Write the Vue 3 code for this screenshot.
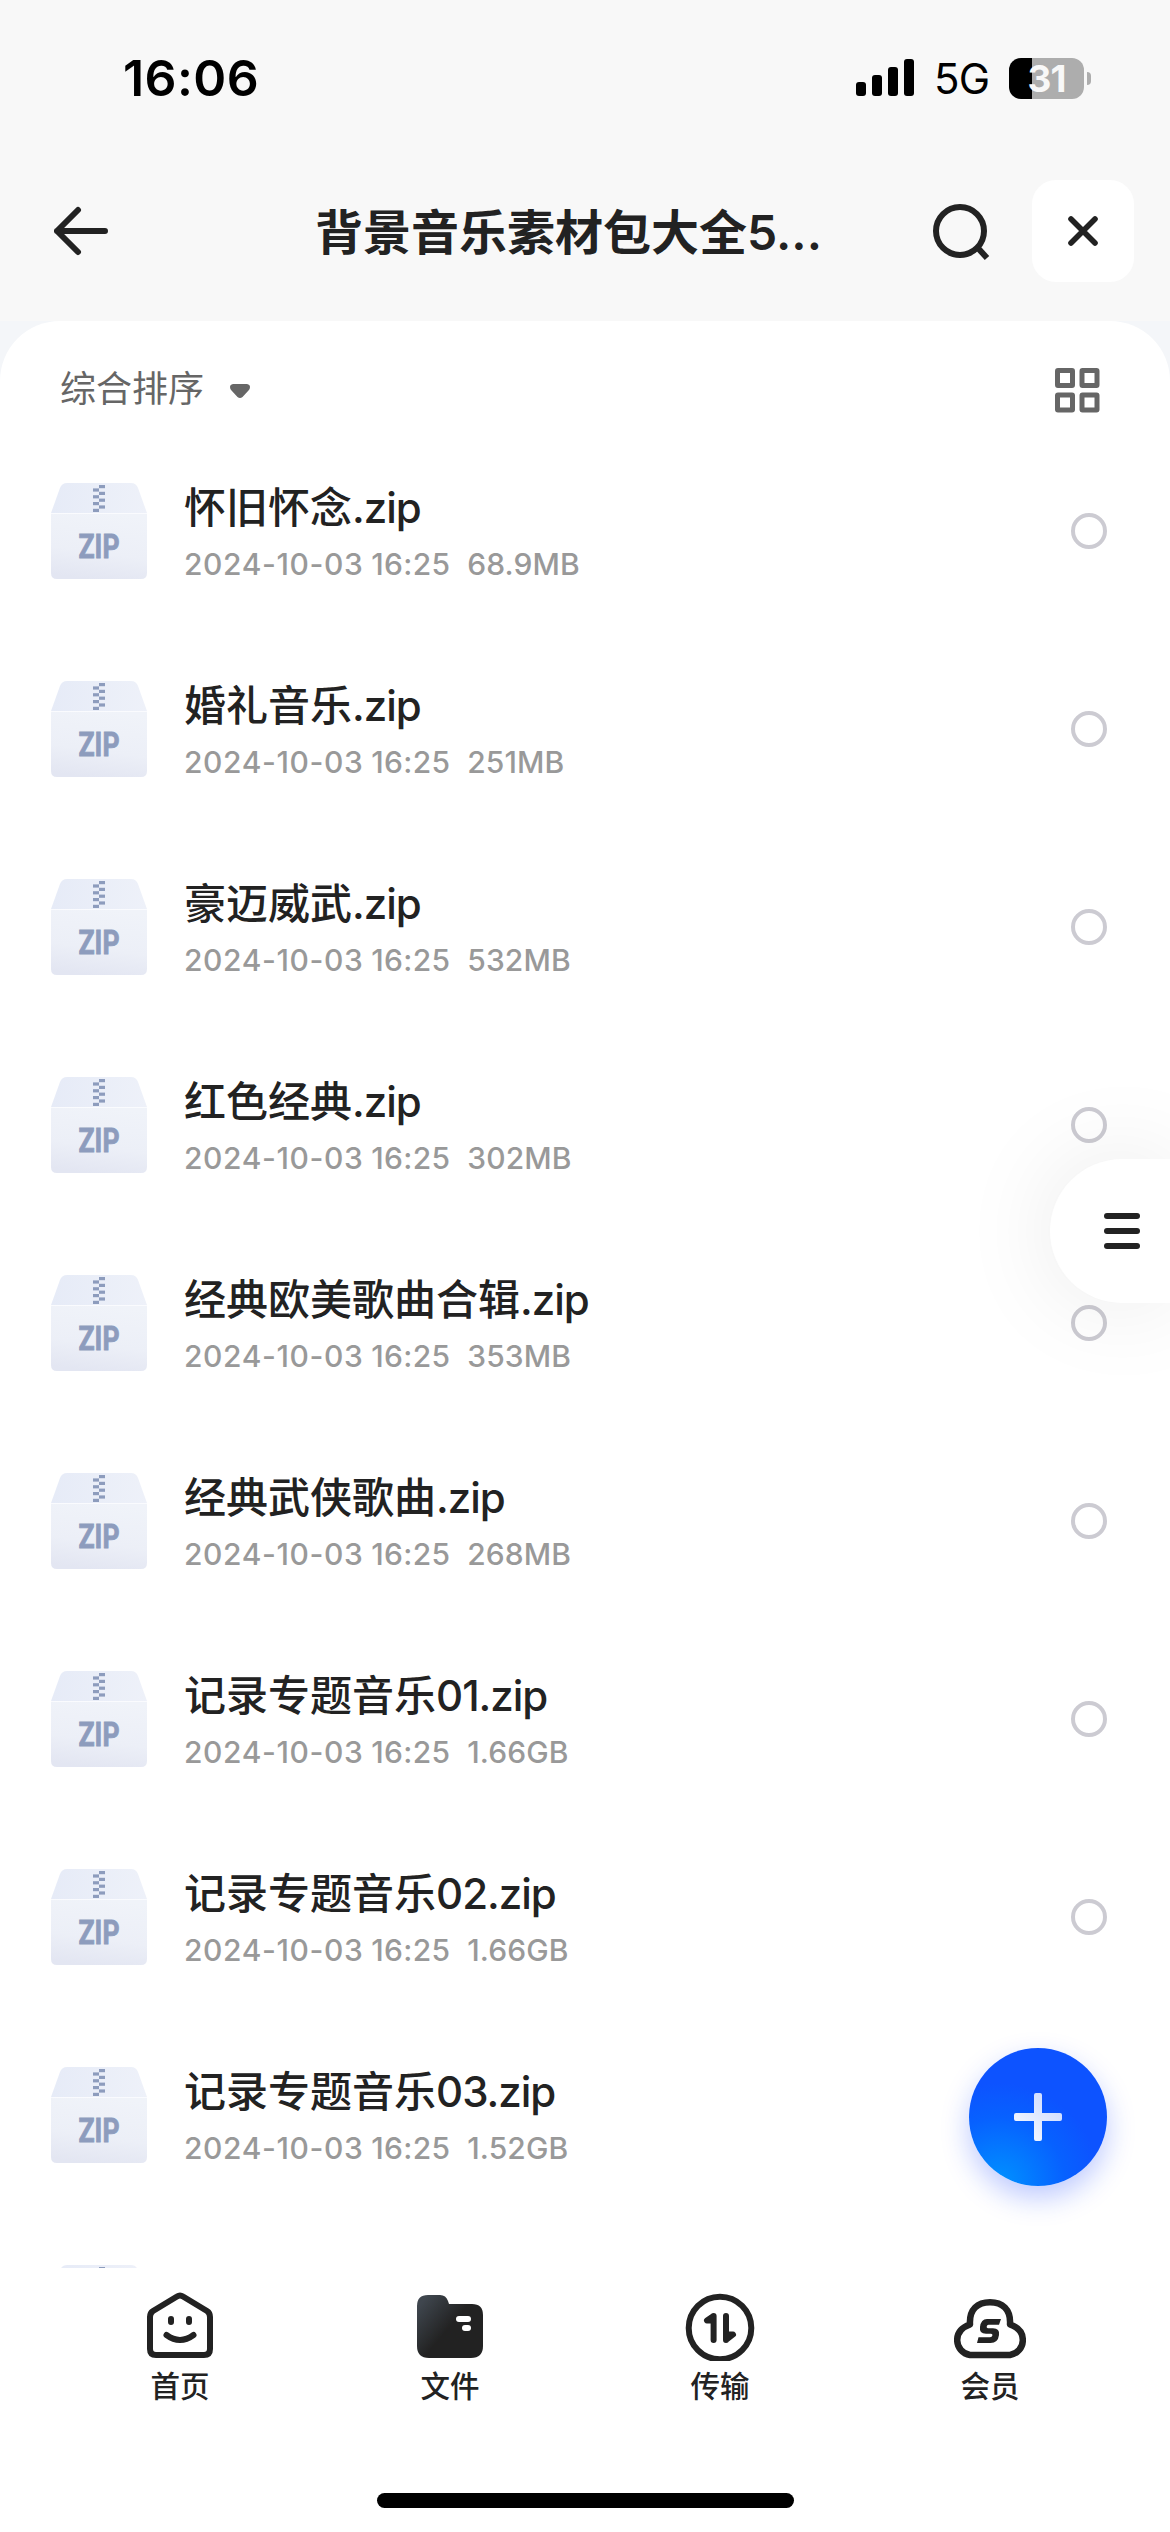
<script setup>
const files = [
  ['怀旧怀念', '.zip', '68.9MB'],
  ['婚礼音乐', '.zip', '251MB'],
  ['豪迈威武', '.zip', '532MB'],
  ['红色经典', '.zip', '302MB'],
  ['经典欧美歌曲合辑', '.zip', '353MB'],
  ['经典武侠歌曲', '.zip', '268MB'],
  ['记录专题音乐', '01.zip', '1.66GB'],
  ['记录专题音乐', '02.zip', '1.66GB'],
  ['记录专题音乐', '03.zip', '1.52GB'],
  ['', '', ''],
]
const teeth = [0, 1, 2, 3, 4, 5, 6, 7]
</script>

<template>
  <div class="screen">
    <header class="top">
      <div class="status">
        <span class="time">16:06</span>
        <div class="indicators">
          <svg class="signal" width="58" height="38" viewBox="0 0 58 38">
            <rect x="0" y="23" width="10" height="14" rx="3" />
            <rect x="16" y="16" width="10" height="21" rx="3" />
            <rect x="32" y="8" width="10" height="29" rx="3" />
            <rect x="48" y="0" width="10" height="37" rx="3" />
          </svg>
          <span class="network">5G</span>
          <div class="battery"><span>31</span></div>
          <i class="nub"></i>
        </div>
      </div>
      <div class="titlebar">
        <svg class="back" width="54" height="50" viewBox="0 0 54 50" fill="none" stroke="#222" stroke-width="6" stroke-linecap="round" stroke-linejoin="round">
          <path d="M51 25H3M24 4L3 25L24 46" />
        </svg>
        <h1>背景音乐素材包大全5...</h1>
        <svg class="search" width="60" height="60" viewBox="0 0 60 60" fill="none" stroke="#222" stroke-width="6">
          <circle cx="29" cy="30" r="24" />
          <path d="M46 46L56 57" />
        </svg>
        <button class="close">
          <svg width="32" height="32" viewBox="0 0 32 32" stroke="#222" stroke-width="5.6" stroke-linecap="round">
            <path d="M4 4L28 28M28 4L4 28" />
          </svg>
        </button>
      </div>
    </header>

    <main class="backdrop">
      <section class="panel">
        <div class="sortbar">
          <span>综合排序</span>
          <svg class="caret" width="20" height="14" viewBox="0 0 20 14"><path d="M3 0H17Q20 .5 20 3Q20 5 18.500 6.500L12.500 13Q10 15 7.500 13L1.500 6.500Q0 5 0 3Q0 .5 3 0Z" fill="#666" /></svg>
          <svg class="grid" width="45" height="45" viewBox="0 0 45 45" fill="none" stroke="#666" stroke-width="5">
            <rect x="2.500" y="2.500" width="15" height="15" rx=".5" />
            <rect x="27" y="2.500" width="15" height="15" rx=".5" />
            <rect x="2.500" y="27" width="15" height="15" rx=".5" />
            <rect x="27" y="27" width="15" height="15" rx=".5" />
          </svg>
        </div>
        <div class="list">
          <div v-for="([title, suffix, size], i) in files" :key="i" class="row">
            <svg class="zip" width="96" height="96" viewBox="0 0 96 96">
              <defs>
                <linearGradient :id="'body' + i" x1=".6" y1="0" x2=".4" y2="1">
                  <stop offset="0" stop-color="#f0f3f9" />
                  <stop offset=".6" stop-color="#eceff7" />
                  <stop offset="1" stop-color="#e3e6f2" />
                </linearGradient>
                <linearGradient :id="'lid' + i" x1="0" y1="0" x2="1" y2="0">
                  <stop offset="0" stop-color="#e6ebf7" />
                  <stop offset="1" stop-color="#eef1f9" />
                </linearGradient>
              </defs>
              <path d="M0 30H96V90Q96 96 90 96H6Q0 96 0 90Z" :fill="`url(#body${i})`" />
              <path d="M0 30L9 5Q11 0 16 0H80Q85 0 87 5L96 30Z" :fill="`url(#lid${i})`" />
              <path d="M0 30.500H96" stroke="#fafbfe" stroke-width="1.200" />
              <rect v-for="t in teeth" :key="t" :x="t % 2 ? 42 : 48" :y="2 + t * 3.400" width="6" height="3.200" fill="#8d9cbd" />
              <text v-if="title" x="48" y="75" text-anchor="middle" textLength="41" lengthAdjust="spacingAndGlyphs">ZIP</text>
            </svg>
            <div class="info">
              <div class="name">{{ title }}<span>{{ suffix }}</span></div>
              <div v-if="title" class="meta"><span class="date">2024-10-03</span><span class="hour">16:25</span><span>{{ size }}</span></div>
            </div>
            <i class="radio"></i>
          </div>
        </div>
      </section>
    </main>

    <nav class="tabs">
      <div class="tab">
        <svg width="72" height="72" viewBox="0 0 72 72" fill="none" stroke="#222" stroke-width="6" stroke-linecap="round" stroke-linejoin="round">
          <path d="M33 7.500Q36 5.500 39 7.500L63 22Q66 24 66 28V60Q66 66 60 66H12Q6 66 6 60V28Q6 24 9 22Z" />
          <path d="M27 30V33M45 30V33M22.500 46Q36 56 49.500 46" />
        </svg>
        <span>首页</span>
      </div>
      <div class="tab">
        <svg width="72" height="72" viewBox="0 0 72 72">
          <defs>
            <linearGradient id="folder" x1="0" y1=".1" x2=".5" y2=".5">
              <stop offset=".1" stop-color="#3f464e" />
              <stop offset="1" stop-color="#222" />
            </linearGradient>
          </defs>
          <path d="M3 17Q3 6 14 6H26Q32 6 34 12L35 15H58Q69 15 69 26V57Q69 69 57 69H15Q3 69 3 57Z" fill="url(#folder)" />
          <rect x="42" y="27" width="15" height="6" rx="3" fill="#fff" />
          <rect x="48" y="36" width="9" height="6" rx="3" fill="#fff" />
        </svg>
        <span>文件</span>
      </div>
      <div class="tab">
        <svg width="72" height="72" viewBox="0 0 72 72" fill="none" stroke="#222" stroke-width="6" stroke-linecap="round" stroke-linejoin="round">
          <circle cx="36" cy="39" r="31.300" />
          <path d="M29.600 27V51M29.600 27L23 31.500H29.600ZM42 27V51M42 51L49 45.500H42Z" fill="#222" />
        </svg>
        <span>传输</span>
      </div>
      <div class="tab">
        <svg width="72" height="72" viewBox="0 0 72 72" fill="none" stroke="#222" stroke-width="6.500" stroke-linejoin="round">
          <path d="M16 66A15 15 0 0 1 3.200 51Q3.200 40 16 35.500C15 20 24 13.200 36 13.200S57 20 56 35.500Q68.800 40 68.800 51A15 15 0 0 1 56 66Z" />
          <path d="M29 30H47L45 35.800H34.500Q33 35.800 32.700 37.500T34 39.200H39Q46 39.200 45 46Q44 54 36.500 54H23L24.500 48.200H36Q38 48.200 38.400 46.500T37 44.800H32Q25 44.800 26 38Q27 30 33 30Z" fill="#222" stroke="none" />
        </svg>
        <span>会员</span>
      </div>
    </nav>
    <div class="home-bar"></div>

    <button class="drawer"><i></i><i></i><i></i></button>
    <button class="fab">
      <svg width="48" height="48" viewBox="0 0 48 48">
        <defs>
          <linearGradient id="plus" x1="0" y1="1" x2="1" y2="0">
            <stop offset=".25" stop-color="#eef4ff" />
            <stop offset=".75" stop-color="#d3e0ff" />
          </linearGradient>
        </defs>
        <path d="M22 0H26Q28 0 28 2V20H46Q48 20 48 22V26Q48 28 46 28H28V46Q28 48 26 48H22Q20 48 20 46V28H2Q0 28 0 26V22Q0 20 2 20H20V2Q20 0 22 0Z" fill="url(#plus)" />
      </svg>
    </button>
  </div>
</template>

<style>
body { margin: 0; background: #fff; }
</style>

<style scoped>
* { box-sizing: border-box; }
.screen { position: relative; width: 1170px; height: 2532px; overflow: hidden; background: #fff; color: #222; font-family: Inter, "Noto Sans CJK SC", sans-serif; }
button { border: 0; padding: 0; display: flex; align-items: center; justify-content: center; }
svg { display: block; flex: none; }
.top { height: 321px; background: #f8f8f8; }
.status { height: 156px; padding: 0 79px 0 123px; display: flex; align-items: center; justify-content: space-between; color: #000; }
.time { font-size: 50px; font-weight: 600; line-height: 60px; letter-spacing: 0.4px; }
.indicators { display: flex; align-items: center; }
.network { width: 95px; padding-left: 20px; font-size: 42px; line-height: 50px; margin-top: 2px; letter-spacing: -0.8px; }
.battery { width: 75px; height: 41px; border-radius: 12px; background: linear-gradient(90deg, #000 23px, #adadad 23px); color: #f8f8f8; font-size: 37px; font-weight: 700; line-height: 41px; text-align: center; letter-spacing: -0.8px; }
.nub { width: 4px; height: 13px; margin-left: 3px; border-radius: 0 4px 4px 0; background: #adadad; }
.titlebar { height: 150px; padding: 0 36px 0 54px; display: flex; align-items: center; }
h1 { margin: 3px 0 0 207px; width: 616px; font-size: 48px; line-height: 70px; font-weight: 600; white-space: nowrap; }
.close { width: 102px; height: 102px; margin-left: 41px; border-radius: 24px; background: #fff; }
.backdrop { height: 1947px; background: linear-gradient(#f4f6f9 60px, #fff 60px); }
.panel { height: 1947px; border-radius: 60px 60px 0 0; background: #fff; overflow: hidden; }
.sortbar { height: 111px; padding: 27px 70px 0 60px; display: flex; align-items: flex-start; color: #666; font-size: 36px; line-height: 82px; }
.caret { margin: 36px 0 0 26px; }
.grid { margin: 20px 0 0 auto; }
.list { height: 1836px; display: flex; flex-direction: column; overflow: hidden; }
.row { height: 198px; flex: none; display: flex; align-items: center; padding: 0 63px 0 51px; }
.zip text { font: 700 33px Roboto, sans-serif; fill: #8d9cbd; stroke: #8d9cbd; stroke-width: 0.8px; }
.info { margin: 3px 0 0 37px; flex: 1; }
.name { font-size: 42px; line-height: 56px; font-weight: 500; min-height: 56px; white-space: nowrap; }
.name span { letter-spacing: -1px; }
.meta { display: flex; color: #999; font-size: 30px; line-height: 42px; margin-top: 7px; font-weight: 500; letter-spacing: 0.1px; }
.date { letter-spacing: 0.6px; }
.hour { margin: 0 17px 0 8px; letter-spacing: 0.3px; }
.radio { width: 36px; height: 36px; border: 4px solid #cccbd2; border-radius: 50%; }
.tabs { height: 225px; padding: 21px 45px 0; display: flex; background: #fff; }
.tab { flex: 1; display: flex; flex-direction: column; align-items: center; font-size: 29.5px; line-height: 42px; font-weight: 500; gap: 4px; }
.home-bar { width: 417px; height: 15px; margin: 0 auto; border-radius: 8px; background: #000; }
.drawer { position: absolute; right: 0; top: 1159px; width: 120px; height: 144px; padding-left: 24px; border-radius: 72px 0 0 72px; background: #fff; box-shadow: 0 0 100px rgba(0, 0, 0, 0.09); flex-direction: column; gap: 9px; }
.drawer i { width: 36px; height: 6px; border-radius: 3px; background: #222; }
.fab { position: absolute; right: 63px; top: 2048px; width: 138px; height: 138px; border-radius: 50%; background: radial-gradient(circle at 22% 98%, #0092ff 0, #0761ff 38%, #0d53ff 58%); box-shadow: 0 12px 28px rgba(13, 60, 255, 0.27); }
</style>
